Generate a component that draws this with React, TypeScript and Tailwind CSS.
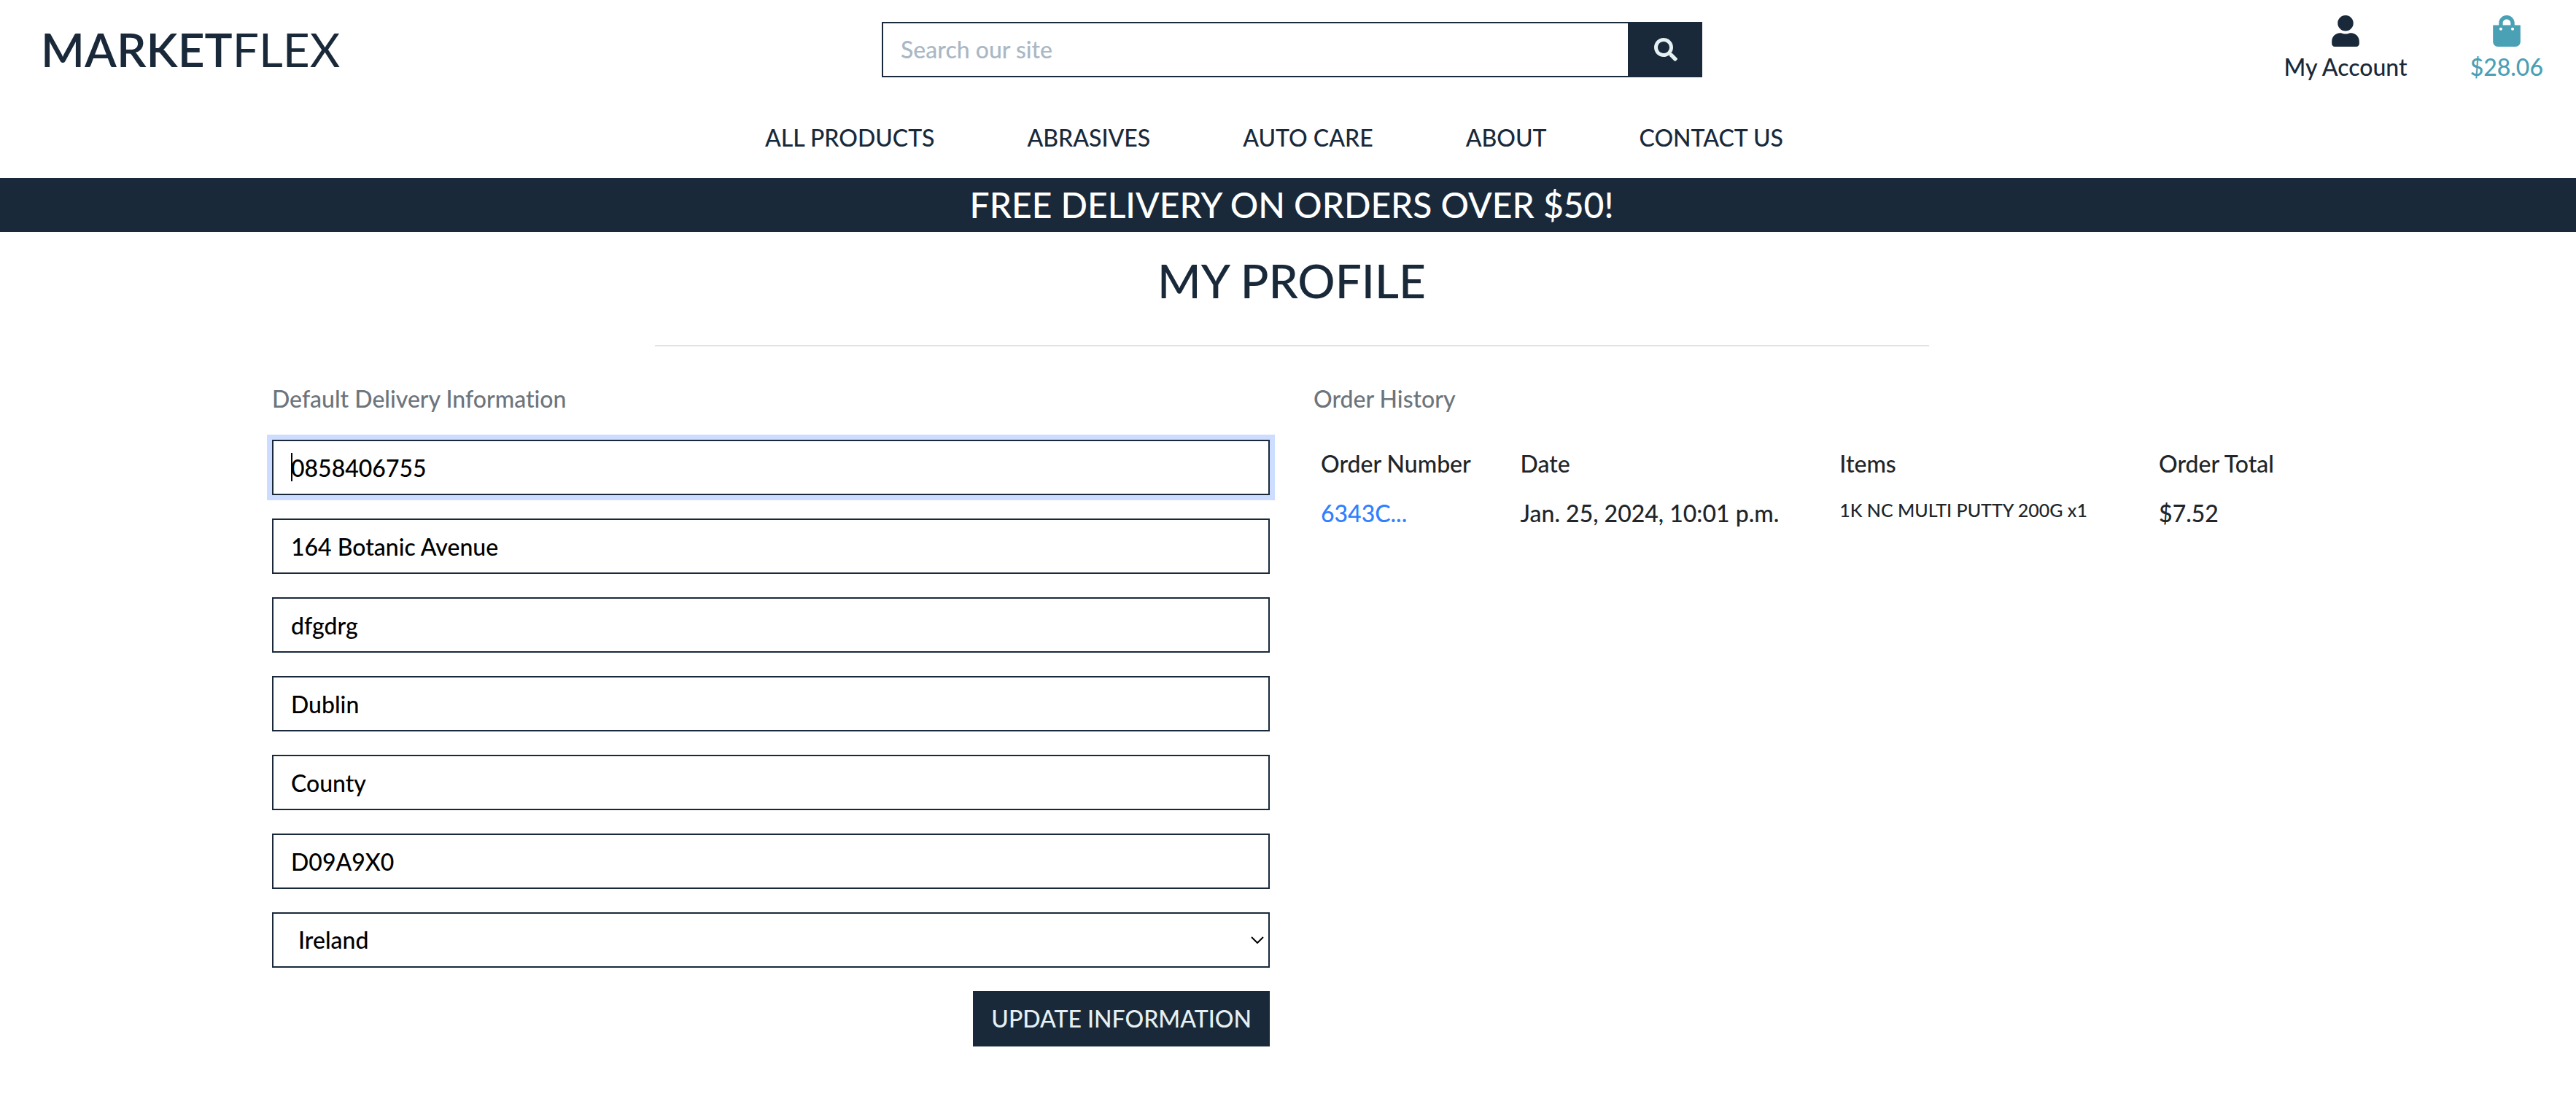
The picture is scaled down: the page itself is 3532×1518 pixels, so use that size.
import { FaSearch, FaUser, FaShoppingBag } from "react-icons/fa";

const navLinks = ["All Products", "Abrasives", "Auto Care", "About", "Contact Us"];

const deliveryFields = [
  { id: "phone", label: "Phone Number", value: "0858406755" },
  { id: "street1", label: "Street Address 1", value: "164 Botanic Avenue" },
  { id: "street2", label: "Street Address 2", value: "dfgdrg" },
  { id: "city", label: "Town or City", value: "Dublin" },
  { id: "county", label: "County", value: "County" },
  { id: "postcode", label: "Postal Code", value: "D09A9X0" },
];

function Header() {
  return (
    <header>
      <div className="grid grid-cols-3 gap-7 pt-[18px] pr-[45px] pl-14">
        <a href="#" className="mt-0.5 text-[64px] leading-[96px] font-normal">
          <span className="font-semibold">MARKET</span>FLEX
        </a>
        <form className="mt-3 flex h-[76px]" onSubmit={(e) => e.preventDefault()}>
          <input
            type="search"
            aria-label="Search our site"
            placeholder="Search our site"
            className="min-w-0 flex-1 border-2 border-[#19293a] px-6 text-black outline-none placeholder:text-[#aab7c4]"
          />
          <button
            type="submit"
            aria-label="Search"
            className="flex w-[100px] items-center justify-center bg-[#19293a] text-[#e6eff1]"
          >
            <FaSearch className="size-8" />
          </button>
        </form>
        <nav aria-label="Account" className="flex items-start justify-end gap-[86px]">
          <a href="#" className="flex flex-col items-center">
            <FaUser className="mt-[3px] h-[43px] w-[38px]" />
            <span className="leading-[56px]">My Account</span>
          </a>
          <a href="#" className="flex flex-col items-center text-[#4aa0b5]">
            <FaShoppingBag className="mt-[3px] h-[43px] w-[38px]" />
            <span className="leading-[56px]">$28.06</span>
          </a>
        </nav>
      </div>
      <nav aria-label="Main" className="mt-[45px] flex justify-center gap-[127px] pr-[38px] pb-[31px] uppercase">
        {navLinks.map((link) => (
          <a key={link} href="#">
            {link}
          </a>
        ))}
      </nav>
    </header>
  );
}

function DeliveryForm() {
  return (
    <section>
      <p className="text-[#6c757d]">Default Delivery Information</p>
      <form className="mt-8 flex flex-col gap-8" onSubmit={(e) => e.preventDefault()}>
        {deliveryFields.map((field, index) => (
          <div key={field.id} className="group relative">
            <input
              id={field.id}
              aria-label={field.label}
              defaultValue={field.value}
              autoFocus={index === 0}
              className="block h-[76px] w-full border-2 border-[#19293a] px-6 text-black caret-transparent outline-none focus:ring-[7px] focus:ring-[#ccddff]"
            />
            <span className="pointer-events-none absolute top-[18px] left-[26px] hidden h-[39px] w-0.5 bg-black group-focus-within:block" />
          </div>
        ))}
        <div className="relative">
          <select
            aria-label="Country"
            defaultValue="Ireland"
            className="block h-[76px] w-full appearance-none border-2 border-[#19293a] bg-white px-[34px] text-black outline-none"
          >
            <option>Ireland</option>
          </select>
          <svg
            viewBox="0 0 18 10"
            className="pointer-events-none absolute top-1/2 right-2 h-2.5 w-[18px] -translate-y-1/2"
            fill="none"
            stroke="#000"
            strokeWidth="2"
          >
            <path d="M1 1l8 8 8-8" />
          </svg>
        </div>
        <button type="submit" className="h-[76px] self-end bg-[#19293a] px-[25px] uppercase text-[#e6eff1]">
          Update Information
        </button>
      </form>
    </section>
  );
}

function OrderHistory() {
  return (
    <section>
      <p className="text-[#6c757d]">Order History</p>
      <table className="mt-[31px] w-full table-fixed text-left text-[#212529]">
        <thead>
          <tr className="h-[68px]">
            <th className="w-[20%] px-2.5 font-medium">Order Number</th>
            <th className="w-[32%] px-2.5 font-medium">Date</th>
            <th className="w-[32%] px-2.5 font-medium">Items</th>
            <th className="w-[16%] px-2.5 font-medium">Order Total</th>
          </tr>
        </thead>
        <tbody>
          <tr className="h-[68px] align-top">
            <td className="px-2.5 py-2.5">
              <a href="#" className="text-[#2f80ff]">
                6343C...
              </a>
            </td>
            <td className="px-2.5 py-2.5">Jan. 25, 2024, 10:01 p.m.</td>
            <td className="px-2.5 py-2.5">
              <ul className="text-[25px] leading-[38px]">
                <li>1K NC MULTI PUTTY 200G x1</li>
              </ul>
            </td>
            <td className="px-2.5 py-2.5">$7.52</td>
          </tr>
        </tbody>
      </table>
    </section>
  );
}

export default function App() {
  return (
    <div className="min-h-screen bg-white font-['Lato',sans-serif] text-[32px] leading-[48px] font-medium text-[#19293a] [font-variant-ligatures:no-common-ligatures]">
      <Header />
      <div className="bg-[#19293a] pl-2.5 text-center text-[48px] leading-[74px] text-white">
        FREE DELIVERY ON ORDERS OVER $50!
      </div>
      <main className="pl-2.5">
        <h1 className="mt-[19px] text-center text-[64px] leading-[96px]">MY PROFILE</h1>
        <hr className="mx-auto mt-10 w-1/2 max-w-[1747px] border-t-2 border-[#e2e2e2]" />
        <div className="mx-auto mt-12 grid max-w-[2796px] grid-cols-2 gap-[60px]">
          <DeliveryForm />
          <OrderHistory />
        </div>
      </main>
    </div>
  );
}
